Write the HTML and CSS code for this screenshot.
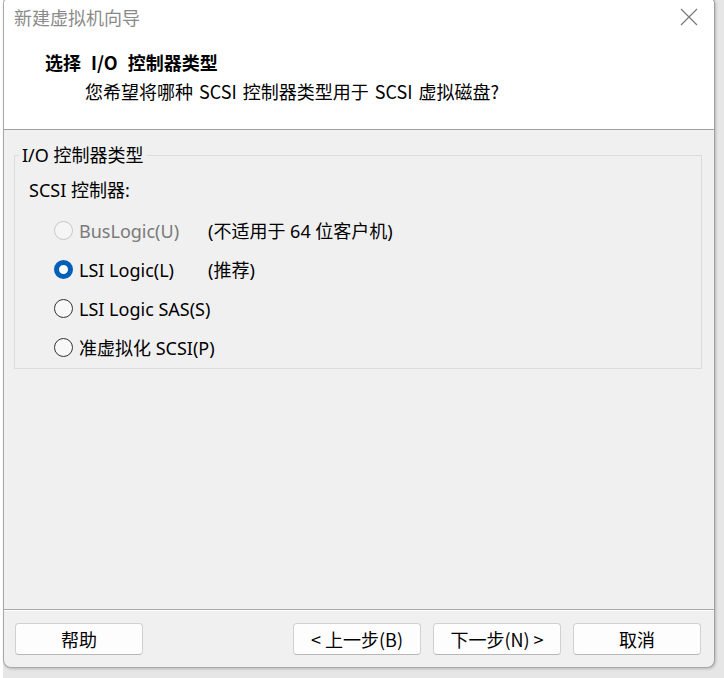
FILE: index.html
```html
<!DOCTYPE html>
<html lang="zh-CN">
<head>
<meta charset="utf-8">
<title>新建虚拟机向导</title>
<link rel="stylesheet" href="styles.css">
</head>
<body>
<div class="window">
  <div class="header">
    <div class="titlebar">
      <span class="wtitle">新建虚拟机向导</span>
      <svg class="close" width="18" height="18" viewBox="0 0 18 18"><path d="M1 1 L17 17 M17 1 L1 17" stroke="#7a7a7a" stroke-width="1.2" fill="none"/></svg>
    </div>
    <div class="htitle">选择 I/O 控制器类型</div>
    <div class="hsub">您希望将哪种 SCSI 控制器类型用于 SCSI 虚拟磁盘?</div>
  </div>
  <div class="content">
    <fieldset class="group">
      <legend>I/O 控制器类型</legend>
      <div class="sublabel">SCSI 控制器:</div>
      <div class="options">
        <div class="opt disabled"><span class="radio"></span><span>BusLogic(U)</span></div>
        <div class="note">(不适用于 64 位客户机)</div>
        <div class="opt"><span class="radio checked"></span><span>LSI Logic(L)</span></div>
        <div class="note">(推荐)</div>
        <div class="opt"><span class="radio"></span><span>LSI Logic SAS(S)</span></div>
        <div class="note"></div>
        <div class="opt"><span class="radio"></span><span>准虚拟化 SCSI(P)</span></div>
        <div class="note"></div>
      </div>
    </fieldset>
  </div>
  <div class="footer">
    <button class="btn">帮助</button>
    <div class="spacer"></div>
    <button class="btn">&lt; 上一步(B)</button>
    <button class="btn">下一步(N) &gt;</button>
    <button class="btn">取消</button>
  </div>
</div>
</body>
</html>
```

FILE: styles.css
```css
html, body {
  margin: 0;
  padding: 0;
}
body {
  width: 724px;
  height: 678px;
  overflow: hidden;
  background: linear-gradient(to right, #ffffff 0, #ffffff 3px, #e6e6e6 3px, #e6e6e6 100%);
  font-family: "Noto Sans", "Noto Sans CJK SC", sans-serif;
  color: #000;
}
.window {
  margin: -4px 0 0 3px;
  width: 712px;
  height: 672px;
  box-sizing: border-box;
  border: 1px solid #a8a8a8;
  border-right-color: #a0a0a0;
  border-radius: 8px;
  background: #f0f0f0;
  overflow: hidden;
  display: flex;
  flex-direction: column;
  box-shadow: 1px 1px 3px rgba(0, 0, 0, 0.2);
}
.header {
  background: #ffffff;
  border-bottom: 1px solid #a0a0a0;
  padding: 8px 0 0 0;
  height: 124px;
}
.titlebar {
  display: flex;
  align-items: center;
  justify-content: space-between;
  height: 24px;
  padding: 0 16px 0 10px;
}
.wtitle {
  font-family: "Noto Sans CJK SC", sans-serif;
  font-size: 18px;
  line-height: 24px;
  color: #8a8a8a;
}
.close {
  display: block;
}
.htitle {
  margin-top: 21px;
  padding-left: 41px;
  font-family: "Noto Sans CJK SC", sans-serif;
  font-weight: 700;
  font-size: 18px;
  line-height: 24px;
  word-spacing: 6px;
}
.hsub {
  margin-top: 5px;
  padding-left: 81px;
  font-family: "Noto Sans CJK SC", sans-serif;
  font-size: 18px;
  line-height: 24px;
  word-spacing: 2px;
}
.content {
  flex: 1;
  padding: 13px 12px 0 10px;
}
.group {
  margin: 0;
  border: 1px solid #dcdcdc;
  padding: 0 0 1px 4px;
  min-width: 0;
}
.group legend {
  padding: 0 3px;
  font-size: 18px;
  line-height: 24px;
}
.sublabel {
  margin-top: 11px;
  padding-left: 10px;
  font-size: 18px;
  line-height: 24px;
}
.options {
  margin-top: 9px;
  display: grid;
  grid-template-columns: 189px auto;
  grid-auto-rows: 39px;
  align-items: center;
}
.opt {
  display: flex;
  align-items: center;
  padding-left: 35px;
  font-size: 18px;
  line-height: 24px;
  gap: 6px;
  white-space: nowrap;
}
.opt.disabled {
  color: #7a7a7a;
}
.note {
  font-size: 18px;
  line-height: 24px;
  white-space: nowrap;
}
.radio {
  width: 19px;
  height: 19px;
  box-sizing: border-box;
  border: 1px solid #333333;
  border-radius: 50%;
  background: #f8f8f8;
  flex: none;
}
.opt.disabled .radio {
  border-color: #c8c8c8;
  background: #f5f5f5;
}
.radio.checked {
  border: 5.5px solid #005fb8;
  background: #ffffff;
}
.footer {
  display: flex;
  gap: 12px;
  border-top: 1px solid #a8a8a8;
  box-shadow: inset 0 1px 0 #ffffff;
  padding: 13px 13px 12px 11px;
}
.spacer {
  flex: 1;
}
.btn {
  width: 128px;
  height: 32px;
  box-sizing: border-box;
  border: 1px solid #d0d0d0;
  border-bottom-color: #b8b8b8;
  border-radius: 4px;
  background: #fdfdfd;
  font-family: "Noto Sans CJK SC", sans-serif;
  font-size: 18px;
  color: #000;
  padding: 0;
}
```
